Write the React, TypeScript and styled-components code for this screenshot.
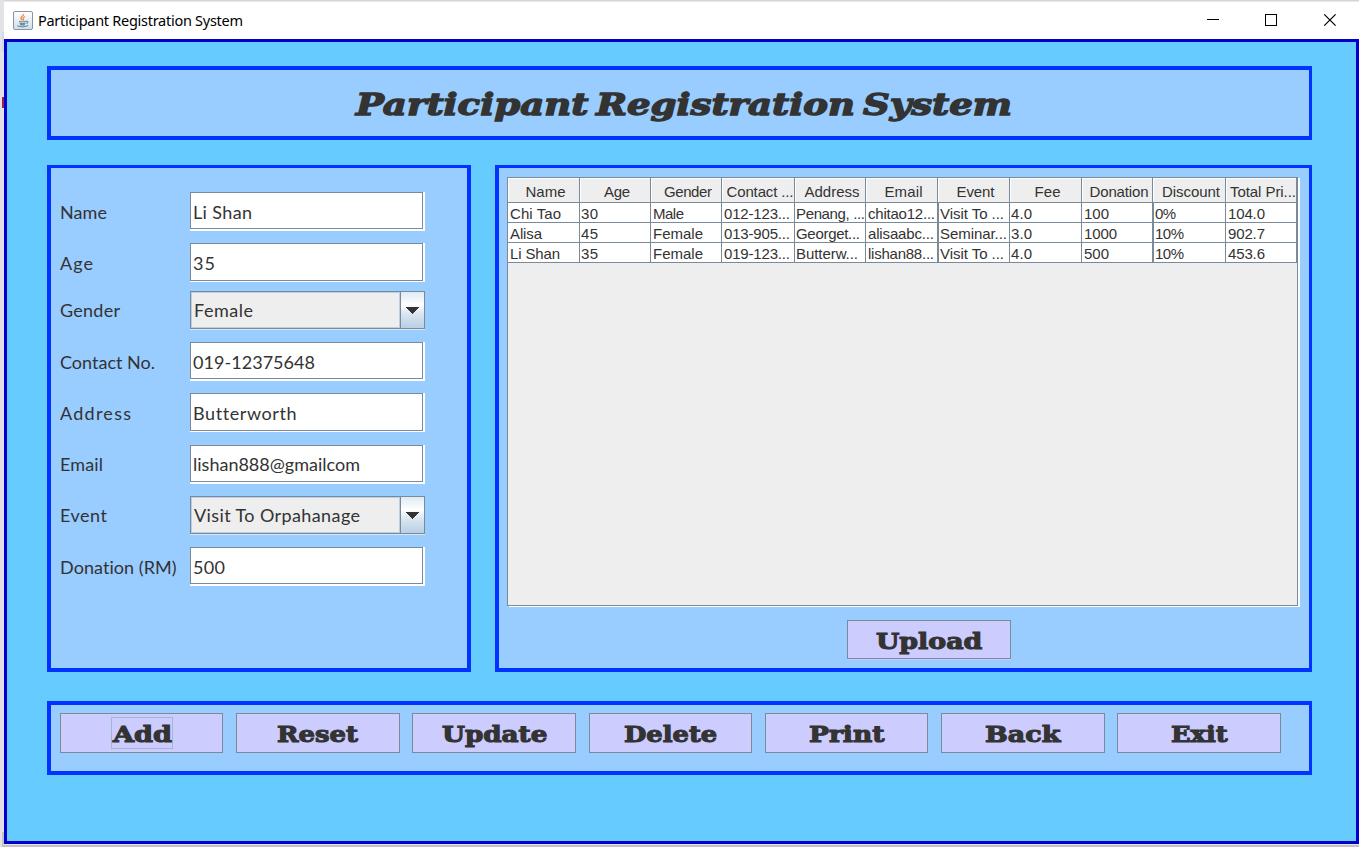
import React, { useLayoutEffect, useRef, useState } from "react";
import styled, { createGlobalStyle, css } from "styled-components";

const GlobalStyle = createGlobalStyle`
  * { box-sizing: border-box; }
  html, body, #root { margin: 0; height: 100%; }
  body { overflow: hidden; background: #c3c3c3; color: #333; }
`;

const steel = "#7a8a99";
const casual = `"Comic Sans MS", Lato, sans-serif`;
const slab = `"Rockwell Extra Bold", "DejaVu Serif", serif`;

/* ---------- text fitted to a given width ---------- */

const Tracked = styled.span`
  display: inline-block;
  white-space: pre;
`;

/* Spreads the letters until the text has the given width. */
function Fit({ text, width }: { text: string; width: number }) {
  const ref = useRef<HTMLSpanElement>(null);
  const [spacing, setSpacing] = useState(0);
  useLayoutEffect(() => {
    if (!ref.current) return;
    const natural = ref.current.getBoundingClientRect().width;
    setSpacing((width - natural) / Math.max(1, text.length - 1));
  }, [text, width]);
  return (
    <Tracked ref={ref} style={{ letterSpacing: spacing, marginRight: -spacing }}>
      {text}
    </Tracked>
  );
}

const StretchBox = styled.span`
  display: block;
  text-align: left;
`;

const Stretched = styled.span`
  display: inline-block;
  white-space: pre;
  transform-origin: 0 50%;
`;

/* Widens the letters themselves, for the extra-bold slab face. */
function Stretch({ text, width }: { text: string; width: number }) {
  const ref = useRef<HTMLSpanElement>(null);
  const [scale, setScale] = useState(1);
  useLayoutEffect(() => {
    if (ref.current) setScale(width / ref.current.offsetWidth);
  }, [text, width]);
  return (
    <StretchBox style={{ width }}>
      <Stretched ref={ref} style={{ transform: `scaleX(${scale})` }}>{text}</Stretched>
    </StretchBox>
  );
}

/* ---------- window chrome ---------- */

const Desktop = styled.div`
  width: 1359px;
  height: 847px;
  display: flex;
  background: linear-gradient(#d4d4d4 0 1px, #e9e9e9 1px 2px, #c3c3c3 2px);
`;

const Edge = styled.div`
  width: 4px;
  flex: none;
  background: linear-gradient(
    #e3e3e5 0 32px, #cfd9ea 32px 52px, #e2e2e8 52px 97px,
    #a0204a 97px 108px, #e2e2e8 108px 832px, #c4c4c6 832px
  );
  border-left: 2px solid #e2e2e6;
`;

const Frame = styled.div`
  flex: 1;
  height: 844px;
  padding-top: 2px;
  display: flex;
  flex-direction: column;
  box-shadow: 0 1px 0 #e6e6e6;
`;

const TitleBar = styled.header`
  height: 37px;
  flex: none;
  display: flex;
  align-items: center;
  padding-left: 9px;
  background: #fff;
  color: #000;
  font: 14.5px/20px "Segoe UI", "Noto Sans", sans-serif;
`;

const Caption = styled.span`
  flex: 1;
  padding: 0 0 1px 5px;
`;

const WindowControls = styled.div`
  display: flex;
  gap: 46px;
  padding-right: 23px;
  svg { display: block; position: relative; top: -1px; }
`;

const Content = styled.main`
  flex: 1;
  border: 3px solid #0000cc;
  background: #66ccff;
  padding: 24px 44px 0 40px;
  display: flex;
  flex-direction: column;
`;

/* ---------- panels ---------- */

const Panel = styled.section`
  background: #99ccff;
  border: 4px solid #0033ff;
  border-right-width: 3px;
`;

const Banner = styled(Panel)`
  height: 74px;
  display: flex;
  justify-content: center;
  padding: 17px 0 0 7px;
`;

const Heading = styled.h1`
  margin: 0;
  font: italic bold 30px/36px ${slab};
  word-spacing: -4px;
  -webkit-text-stroke: 1.4px #333;
`;

const Columns = styled.div`
  display: flex;
  gap: 24px;
  height: 507px;
  margin: 25px 0 29px;
`;

const FormPanel = styled(Panel)`
  width: 424px;
  border-top-width: 3px;
  border-right-width: 4px;
  padding: 24px 0 0 9px;
`;

const FormRow = styled.div<{ $gap: number }>`
  height: 39px;
  margin-bottom: ${(p) => p.$gap}px;
  display: flex;
  font: 18px/39px ${casual};
`;

const Label = styled.label<{ $raised?: boolean }>`
  width: 130px;
  height: 39px;
  padding-top: ${(p) => (p.$raised ? 0 : 1)}px;
  line-height: ${(p) => (p.$raised ? 38 : 39)}px;
`;

const Field = styled.div`
  width: 235px;
  height: 39px;
  background: #fff;
  border-right: 2px solid #fff;
`;

const FieldInner = styled.div<{ $tall?: boolean; $raised?: boolean }>`
  height: ${(p) => (p.$tall ? 38 : 37)}px;
  border: 1px solid ${steel};
  padding-left: 2px;
  line-height: ${(p) => (p.$raised ? 36 : 38)}px;
`;

const Combo = styled.div`
  width: 235px;
  height: 38px;
  display: flex;
  border: 1px solid ${steel};
  box-shadow: 0 1px 0 #dbe6f0;
`;

const ComboValue = styled.div`
  flex: 1;
  background: #eee;
  border: 1px solid #b8cfe5;
  padding-left: 2px;
  line-height: 34px;
`;

const ComboArrow = styled.div`
  width: 24px;
  border-left: 1px solid ${steel};
  background: linear-gradient(#dfe9f3, #fff 35%, #dbe6f1 60%, #b8cfe5);
  display: flex;
  align-items: center;
  padding-left: 4px;
`;

const DataPanel = styled(Panel)`
  flex: 1;
  border-top-width: 3px;
  padding: 9px 9px 0 8px;
  display: flex;
  flex-direction: column;
  align-items: center;
`;

/* ---------- table ---------- */

const ScrollPane = styled.div`
  width: 791px;
  height: 429px;
  align-self: flex-start;
  border: 1px solid ${steel};
  background: #eee;
  box-shadow: 2px 1px 0 #fff;
  margin-bottom: 14px;
`;

const TableRow = styled.div`
  display: grid;
  grid-template-columns: 72px 71px 71px 73px 71px 72px 72px 72px 71px 73px 71px;
  font: 15px/21px "Liberation Sans", Arial, sans-serif;
`;

const cell = css`
  border-right: 1px solid ${steel};
  border-bottom: 1px solid ${steel};
  white-space: nowrap;
  overflow: hidden;
`;

const HeadCell = styled.div`
  ${cell}
  height: 25px;
  display: flex;
  justify-content: center;
  line-height: 27px;
  padding-left: 4px;
  box-shadow: inset 1px 1px 0 #fff;
`;

const Cell = styled.div<{ $double?: boolean; $inset: number }>`
  ${cell}
  height: 20px;
  background: #fff;
  padding-left: ${(p) => p.$inset}px;
  border-left: ${(p) => (p.$double ? `1px solid ${steel}` : "none")};
`;

/* ---------- buttons ---------- */

const Button = styled.button`
  width: 163.5px;
  height: 40px;
  flex: none;
  display: flex;
  align-items: center;
  justify-content: center;
  padding: 2px 0 0;
  border: 1px solid ${steel};
  background: #ccccff;
  color: #333;
  font: bold 23px/30px ${slab};
  -webkit-text-stroke: 1.1px #333;
`;

const UploadButton = styled(Button)`
  width: 164px;
  height: 39px;
  margin-left: 51px;
  box-shadow: 0 1px 0 #ccccff;
`;

const FocusRing = styled.span`
  height: 32px;
  margin-top: -2px;
  padding: 1px 0 0 1px;
  border: 1px solid #a3b8cc;
`;

const ButtonBar = styled(Panel)`
  height: 74px;
  display: flex;
  gap: 12.75px;
  padding: 8px 0 0 8.9px;
`;

/* ---------- data ---------- */

type FieldSpec = {
  label: string; labelWidth: number; value: string; valueWidth: number; gap: number;
  combo?: boolean; tall?: boolean; raised?: boolean;
};

const fields: FieldSpec[] = [
  { label: "Name", labelWidth: 47, value: "Li Shan", valueWidth: 59, gap: 12 },
  { label: "Age", labelWidth: 33, value: "35", valueWidth: 22, gap: 9, tall: true },
  { label: "Gender", labelWidth: 60, value: "Female", valueWidth: 59, gap: 12, combo: true, raised: true },
  { label: "Contact No.", labelWidth: 95, value: "019-12375648", valueWidth: 122, gap: 12 },
  { label: "Address", labelWidth: 71, value: "Butterworth", valueWidth: 103, gap: 13, tall: true },
  { label: "Email", labelWidth: 43, value: "lishan888@gmailcom", valueWidth: 167, gap: 12, raised: true },
  { label: "Event", labelWidth: 47, value: "Visit To Orpahanage", valueWidth: 166, gap: 12, combo: true, raised: true },
  { label: "Donation (RM)", labelWidth: 117, value: "500", valueWidth: 32, gap: 0 },
];

const headers: [string, number][] = [
  ["Name", 40], ["Age", 26], ["Gender", 48], ["Contact ...", 67], ["Address", 55], ["Email", 38],
  ["Event", 38], ["Fee", 26], ["Donation", 59], ["Discount", 58], ["Total Pri...", 66],
];

const rows: [string, number][][] = [
  [["Chi Tao", 51], ["30", 17], ["Male", 31], ["012-123...", 66], ["Penang, ...", 69], ["chitao12...", 67],
    ["Visit To ...", 64], ["4.0", 21], ["100", 25], ["0%", 21], ["104.0", 37]],
  [["Alisa", 32], ["45", 17], ["Female", 50], ["013-905...", 66], ["Georget...", 64], ["alisaabc...", 66],
    ["Seminar...", 67], ["3.0", 21], ["1000", 33], ["10%", 29], ["902.7", 37]],
  [["Li Shan", 50], ["35", 17], ["Female", 50], ["019-123...", 66], ["Butterw...", 62], ["lishan88...", 66],
    ["Visit To ...", 64], ["4.0", 21], ["500", 25], ["10%", 29], ["453.6", 37]],
];

const insets = [2, 1, 2, 2, 1, 2, 1, 1, 2, 1, 2];

const actions: [string, number][] = [
  ["Add", 59], ["Reset", 81], ["Update", 105], ["Delete", 93], ["Print", 76], ["Back", 75], ["Exit", 57],
];

const JavaIcon = () => (
  <svg width="20" height="19" viewBox="0 0 20 19" fill="none">
    <defs>
      <linearGradient id="tile" x1="0" y1="0" x2="0" y2="1">
        <stop offset="0" stopColor="#fff" />
        <stop offset="1" stopColor="#d5dde4" />
      </linearGradient>
    </defs>
    <rect x="0.5" y="0.5" width="19" height="18" rx="1.5" fill="url(#tile)" stroke="#8496a5" />
    <path d="M10.5 3c.6 2-3 2.600-2.600 4.300.2.900 1 1.300 1.400 2.200M12 5.500c-1.500.700-2.200 1.400-1.600 2.400.4.700.2 1.200-.3 1.600" stroke="#e98a45" strokeWidth="1.300" />
    <path d="M6 10.300c1.500.7 5 .7 7 0M6.500 12c1.500.7 4.500.700 6 0M7 13.400c1.500.6 3.500.6 5 0M13 10.300c2.500-.6 2.500 1.600.4 2.200M4.300 14.600c2 1.500 9 1.500 11-.2" stroke="#5f88a5" strokeWidth="1.100" />
  </svg>
);

export default function App() {
  return (
    <>
      <GlobalStyle />
      <Desktop>
        <Edge />
        <Frame>
          <TitleBar>
            <JavaIcon />
            <Caption><Fit text="Participant Registration System" width={205} /></Caption>
            <WindowControls>
              <svg width="12" height="12" shapeRendering="crispEdges"><path d="M0 5.500h12" stroke="#000" /></svg>
              <svg width="12" height="12" shapeRendering="crispEdges"><rect x="0.5" y="0.5" width="11" height="11" fill="none" stroke="#000" /></svg>
              <svg width="13" height="12"><path d="M1.200 .3l11.400 11.400M12.600 .3L1.200 11.700" stroke="#000" strokeWidth="1.100" /></svg>
            </WindowControls>
          </TitleBar>
          <Content>
            <Banner>
              <Heading><Stretch text="Participant Registration System" width={656} /></Heading>
            </Banner>
            <Columns>
              <FormPanel>
                {fields.map((f) => (
                  <FormRow key={f.label} $gap={f.gap}>
                    <Label $raised={f.raised}><Fit text={f.label} width={f.labelWidth} /></Label>
                    {f.combo ? (
                      <Combo>
                        <ComboValue><Fit text={f.value} width={f.valueWidth} /></ComboValue>
                        <ComboArrow>
                          <svg width="14" height="7" shapeRendering="crispEdges"><path d="M0 0h14L7 7z" fill="#333" /></svg>
                        </ComboArrow>
                      </Combo>
                    ) : (
                      <Field>
                        <FieldInner $tall={f.tall} $raised={f.raised}>
                          <Fit text={f.value} width={f.valueWidth} />
                        </FieldInner>
                      </Field>
                    )}
                  </FormRow>
                ))}
              </FormPanel>
              <DataPanel>
                <ScrollPane>
                  <TableRow>
                    {headers.map(([text, width]) => (
                      <HeadCell key={text}><Fit text={text} width={width} /></HeadCell>
                    ))}
                  </TableRow>
                  {rows.map((row, r) => (
                    <TableRow key={r}>
                      {row.map(([text, width], c) => (
                        <Cell key={c} $double={c === 6 || c === 9} $inset={insets[c]}>
                          <Fit text={text} width={width} />
                        </Cell>
                      ))}
                    </TableRow>
                  ))}
                </ScrollPane>
                <UploadButton><Stretch text="Upload" width={106} /></UploadButton>
              </DataPanel>
            </Columns>
            <ButtonBar>
              {actions.map(([text, width], i) => (
                <Button key={text}>
                  {i === 0 ? <FocusRing><Stretch text={text} width={width} /></FocusRing> : <Stretch text={text} width={width} />}
                </Button>
              ))}
            </ButtonBar>
          </Content>
        </Frame>
      </Desktop>
    </>
  );
}
